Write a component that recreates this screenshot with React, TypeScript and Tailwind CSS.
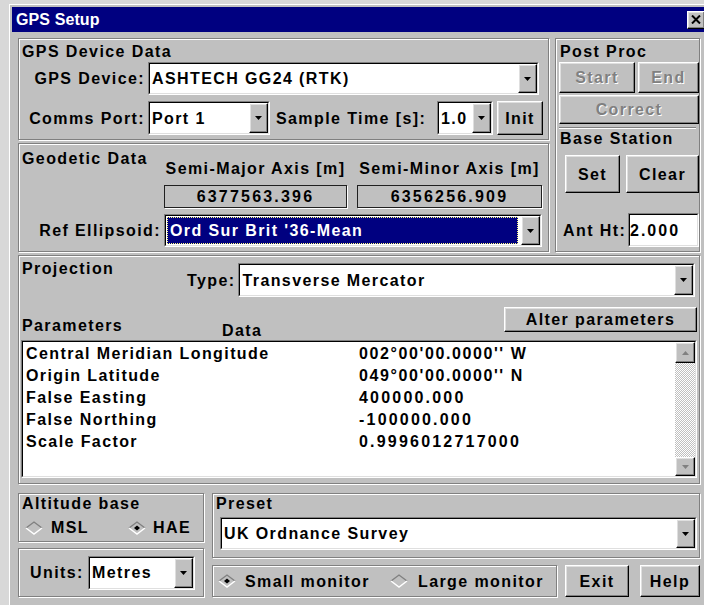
import React from 'react';

const raised =
  'border border-t-white border-l-white border-b-black border-r-black shadow-[inset_-1px_-1px_0_#808080,inset_1px_1px_0_#dfdfdf]';
const etched = 'border border-[#808080] shadow-[inset_1px_1px_0_#fff,1px_1px_0_#fff]';

type BoxProps = { children?: React.ReactNode; className?: string; innerClassName?: string };

function Sunken({ children, className = '', innerClassName = '' }: BoxProps) {
  return (
    <div className={`border border-t-[#808080] border-l-[#808080] border-b-white border-r-white ${className}`}>
      <div
        className={`h-full border border-t-black border-l-black border-b-[#dfdfdf] border-r-[#dfdfdf] bg-white ${innerClassName}`}
      >
        {children}
      </div>
    </div>
  );
}

function Group({ children, className = '' }: BoxProps) {
  return <div className={`${etched} ${className}`}>{children}</div>;
}

function Button({ label, className = '', disabled = false }: { label: string; className?: string; disabled?: boolean }) {
  return (
    <div
      className={`flex items-center justify-center bg-[#c0c0c0] ${raised} ${className} ${
        disabled ? 'text-[#808080] [text-shadow:1px_1px_0_#fff]' : ''
      }`}
    >
      {label}
    </div>
  );
}

function Arrow({ up = false, color = '#000' }: { up?: boolean; color?: string }) {
  return (
    <svg width="7" height="4" viewBox="0 0 7 4">
      <path d={up ? 'M0 4H7L3.5 0Z' : 'M0 0H7L3.5 4Z'} fill={color} />
    </svg>
  );
}

function DropButton() {
  return (
    <div className={`flex h-full w-[19px] shrink-0 items-center justify-center bg-[#c0c0c0] ${raised}`}>
      <Arrow />
    </div>
  );
}

function Combo({ value, className = '', selected = false }: { value: string; className?: string; selected?: boolean }) {
  return (
    <Sunken className={className} innerClassName="flex items-stretch">
      <div className="flex min-w-0 flex-1 items-center">
        {selected ? (
          <span className="mx-[1px] mr-[3px] flex h-[calc(100%-2px)] flex-1 items-center border border-dotted border-[#ffff80] bg-[#000080] pl-[2px] text-white">
            {value}
          </span>
        ) : (
          <span className="truncate pl-[2px]">{value}</span>
        )}
      </div>
      <DropButton />
    </Sunken>
  );
}

function Radio({ checked = false }: { checked?: boolean }) {
  return (
    <svg width="18" height="14" viewBox="0 0 18 14" className="shrink-0">
      <path d="M1 7L9 1L17 7" fill="none" stroke="#808080" strokeWidth="1.4" />
      <path d="M1 7L9 13L17 7" fill="none" stroke="#fff" strokeWidth="1.4" />
      {checked && <path d="M6 7L9 4.6L12 7L9 9.4Z" fill="#000" />}
    </svg>
  );
}

const params: [string, string][] = [
  ['Central Meridian Longitude', "002°00'00.0000'' W"],
  ['Origin Latitude', "049°00'00.0000'' N"],
  ['False Easting', '400000.000'],
  ['False Northing', '-100000.000'],
  ['Scale Factor', '0.9996012717000'],
];

export default function App() {
  return (
    <div className="h-[605px] w-[704px] overflow-hidden bg-[#d8d8d8] font-['Liberation_Sans',Arial,sans-serif] text-[16px] leading-[19px] font-bold tracking-[1.4px] whitespace-nowrap text-black">
      <div className="mt-[4px] ml-[9px] h-[620px] w-[702px] border-t border-l border-white bg-[#c0c0c0] p-[2px]">
        {/* title bar */}
        <div className="flex h-[25px] items-center bg-[#000080] pr-[4px] pl-[4px] tracking-[0.1px] text-white">
          <span>GPS Setup</span>
          <div className={`ml-auto flex h-[18px] w-[18px] items-center justify-center bg-[#c0c0c0] ${raised}`}>
            <svg width="10" height="9" viewBox="0 0 10 9">
              <path d="M1 0.5L9 8.5M9 0.5L1 8.5" stroke="#000" strokeWidth="2" />
            </svg>
          </div>
        </div>

        <div className="pt-[6px] pl-[6px]">
          {/* device, geodetic and base station */}
          <div className="flex gap-[6px]">
            <div className="flex w-[531px] flex-col gap-[3px]">
              <Group className="h-[102px] pt-[3px]">
                <div className="pl-[3px]">GPS Device Data</div>
                <div className="mt-[1px] flex items-center">
                  <span className="w-[126px] text-right">GPS Device:</span>
                  <Combo value="ASHTECH GG24 (RTK)" className="ml-[3px] h-[33px] w-[391px]" />
                </div>
                <div className="mt-[6px] flex items-center">
                  <span className="w-[126px] text-right">Comms Port:</span>
                  <Combo value="Port 1" className="ml-[3px] h-[34px] w-[122px]" />
                  <span className="ml-[6px] w-[161px]">Sample Time [s]:</span>
                  <Combo value="1.0" className="h-[34px] w-[56px]" />
                  <Button label="Init" className="ml-[4px] h-[34px] w-[46px]" />
                </div>
              </Group>

              <Group className="h-[109px] pt-[5px]">
                <div className="flex">
                  <span className="w-[145px] pl-[3px]">Geodetic Data</span>
                  <div className="flex gap-[10px] pt-[10px]">
                    <div className="flex w-[183px] flex-col items-center">
                      <span>Semi-Major Axis [m]</span>
                      <div className="mt-[7px] flex h-[23px] w-full items-center justify-center border border-[#202020] tracking-[2.2px] shadow-[1px_1px_0_#fff]">
                        6377563.396
                      </div>
                    </div>
                    <div className="flex w-[185px] flex-col items-center">
                      <span>Semi-Minor Axis [m]</span>
                      <div className="mt-[7px] flex h-[23px] w-full items-center justify-center border border-[#202020] tracking-[2.2px] shadow-[1px_1px_0_#fff]">
                        6356256.909
                      </div>
                    </div>
                  </div>
                </div>
                <div className="mt-[6px] flex items-center">
                  <span className="w-[142px] text-right">Ref Ellipsoid:</span>
                  <Combo value="Ord Sur Brit '36-Mean" selected className="ml-[3px] h-[33px] w-[378px]" />
                </div>
              </Group>
            </div>

            <Group className="flex h-[214px] w-[145px] flex-col pt-[3px]">
              <div className="pl-[4px]">Post Proc</div>
              <div className="mt-[1px] flex pl-[3px]">
                <Button label="Start" disabled className="h-[31px] w-[76px]" />
                <Button label="End" disabled className="ml-[3px] h-[31px] w-[61px]" />
              </div>
              <Button label="Correct" disabled className="mt-[2px] ml-[3px] h-[29px] w-[140px]" />
              <div className="mx-[3px] mt-[3px] h-[2px] border-t border-b border-t-[#808080] border-b-white" />
              <div className="pl-[4px]">Base Station</div>
              <div className="mt-[7px] flex pl-[9px]">
                <Button label="Set" className="h-[38px] w-[55px]" />
                <Button label="Clear" className="ml-[6px] h-[38px] w-[73px]" />
              </div>
              <div className="mt-[20px] flex items-center pl-[7px]">
                <span className="w-[65px]">Ant Ht:</span>
                <Sunken className="h-[34px] w-[71px]" innerClassName="flex items-center tracking-[2px]">
                  2.000
                </Sunken>
              </div>
            </Group>
          </div>

          {/* projection */}
          <Group className="mt-[3px] flex h-[229px] w-[682px] flex-col pt-[3px]">
            <div className="flex items-start">
              <span className="w-[168px] pl-[3px]">Projection</span>
              <div className="mt-[4px] flex items-center">
                <span>Type:</span>
                <Combo value="Transverse Mercator" className="ml-[3px] h-[34px] w-[457px]" />
              </div>
            </div>
            <div className="mt-[10px] flex items-start">
              <span className="mt-[9px] w-[203px] pl-[3px]">Parameters</span>
              <span className="mt-[14px]">Data</span>
              <Button label="Alter parameters" className="mr-[2px] ml-auto h-[25px] w-[193px]" />
            </div>
            <Sunken className="ml-[2px] h-[138px] w-[676px]" innerClassName="flex">
              <div className="flex-1 pt-[1px] pl-[3px] leading-[22px]">
                {params.map(([name, data]) => (
                  <div key={name} className="grid grid-cols-[333px_1fr]">
                    <span>{name}</span>
                    <span className={/^[-0-9.]+$/.test(data) ? 'tracking-[2.2px]' : 'tracking-[1.6px]'}>{data}</span>
                  </div>
                ))}
              </div>
              <div className="flex w-[20px] flex-col">
                <div className={`flex h-[21px] items-center justify-center bg-[#c0c0c0] ${raised}`}>
                  <Arrow up color="#808080" />
                </div>
                <div className="flex-1 bg-[repeating-conic-gradient(#c0c0c0_0%_25%,#ffffff_0%_50%)] bg-[length:2px_2px]" />
                <div className={`flex h-[19px] items-center justify-center bg-[#c0c0c0] ${raised}`}>
                  <Arrow color="#808080" />
                </div>
              </div>
            </Sunken>
          </Group>

          {/* altitude, units, preset and exit */}
          <div className="mt-[9px] flex gap-[8px]">
            <div className="flex w-[186px] flex-col">
              <Group className="h-[49px]">
                <div className="pl-[3px]">Altitude base</div>
                <div className="mt-[5px] flex h-[19px] items-center pl-[6px]">
                  <Radio />
                  <span className="ml-[8px] w-[77px]">MSL</span>
                  <Radio checked />
                  <span className="ml-[7px]">HAE</span>
                </div>
              </Group>
              <Group className="mt-[6px] flex h-[49px] items-center pl-[11px]">
                <span className="w-[58px]">Units:</span>
                <Combo value="Metres" className="h-[34px] w-[107px]" />
              </Group>
            </div>

            <div className="flex w-[488px] flex-col">
              <Group className="h-[65px]">
                <div className="pl-[3px]">Preset</div>
                <Combo value="UK Ordnance Survey" className="mt-[4px] ml-[7px] h-[33px] w-[477px]" />
              </Group>
              <div className="mt-[7px] flex">
                <Group className="flex h-[32px] w-[345px] items-center pl-[5px]">
                  <Radio checked />
                  <span className="ml-[9px] w-[145px]">Small monitor</span>
                  <Radio />
                  <span className="ml-[10px]">Large monitor</span>
                </Group>
                <Button label="Exit" className="ml-[8px] h-[32px] w-[64px]" />
                <Button label="Help" className="ml-[11px] h-[32px] w-[60px]" />
              </div>
            </div>
          </div>
        </div>
      </div>
    </div>
  );
}
